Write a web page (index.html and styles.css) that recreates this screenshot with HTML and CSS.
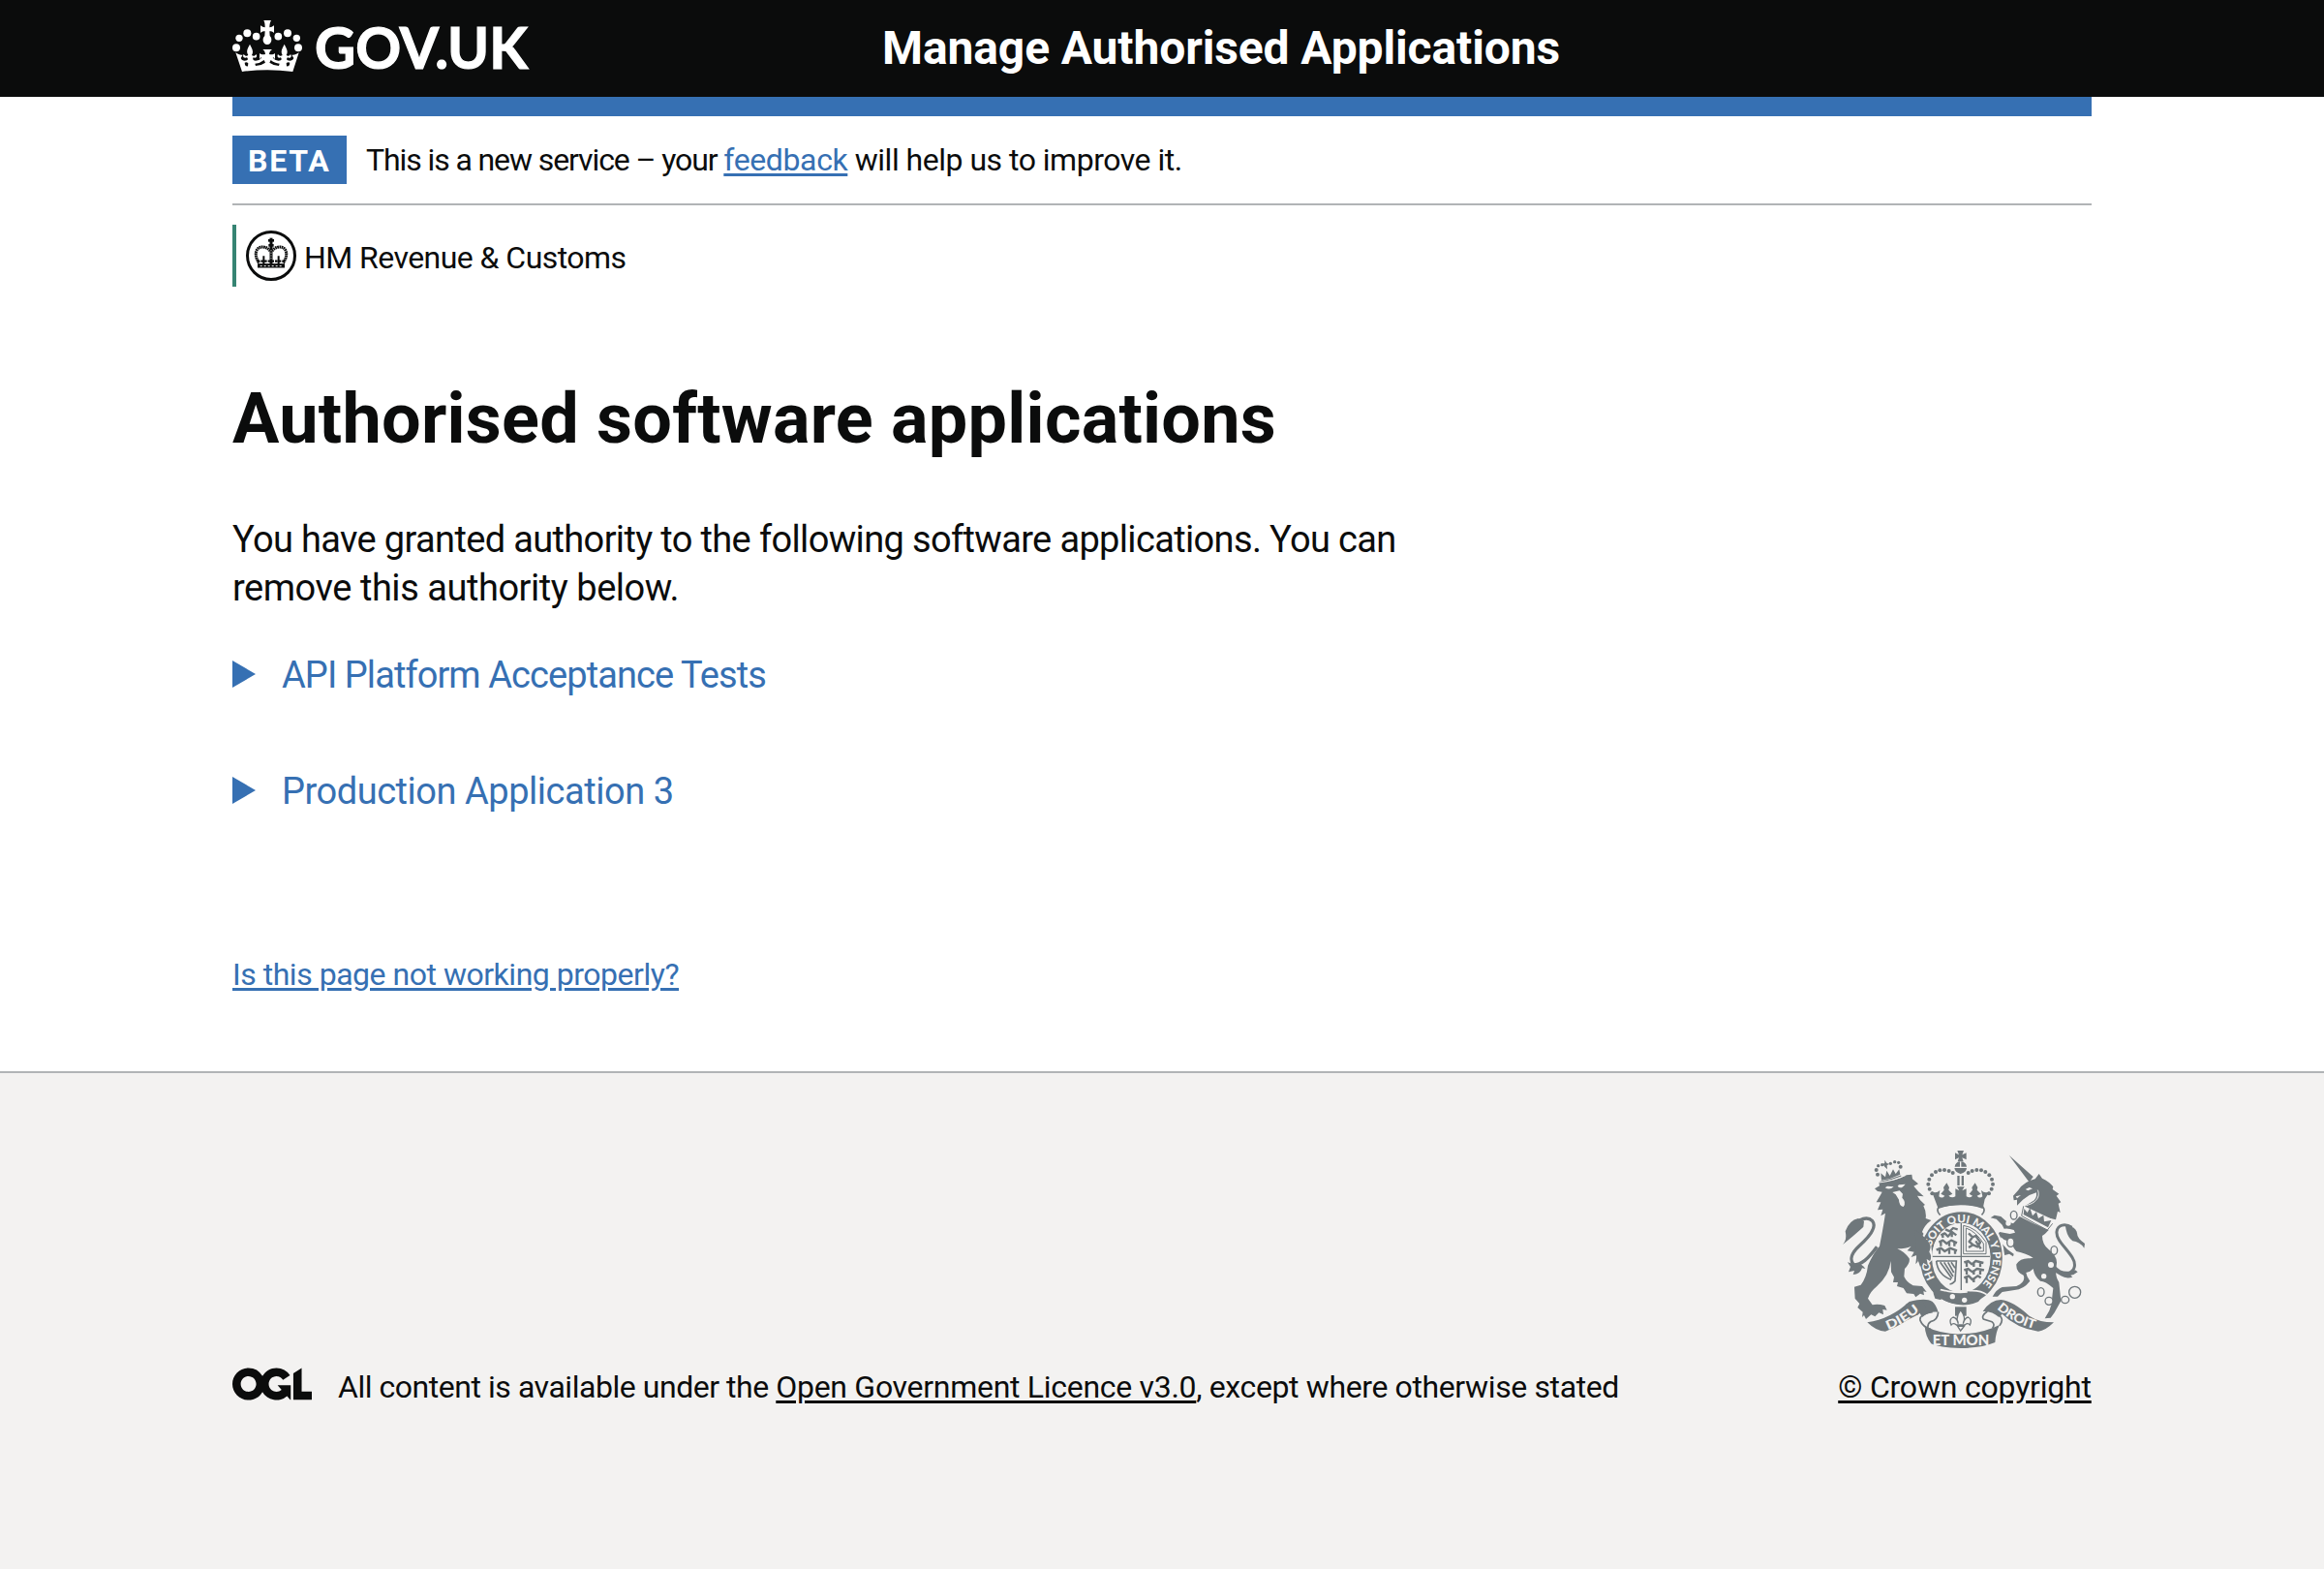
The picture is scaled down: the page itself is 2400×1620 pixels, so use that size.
FILE: index.html
```
<!DOCTYPE html>
<html lang="en">
<head>
<meta charset="utf-8">
<title>Authorised software applications</title>
<link rel="stylesheet" href="styles.css">
</head>
<body>
<header class="header">
  <svg class="header-logo" viewBox="0 0 310 60">
    <g fill="#fff" transform="scale(.33333) translate(-30 -60)">
      <circle cx="42" cy="148" r="12"/><circle cx="51" cy="118" r="11"/><circle cx="76" cy="103" r="12"/><circle cx="104" cy="113" r="11.5"/>
      <circle cx="172" cy="113" r="11.5"/><circle cx="201" cy="103" r="12"/><circle cx="229" cy="118" r="11"/><circle cx="234" cy="148" r="12"/>
      <path d="M127 63H150C147 69 145 74 145 85C150 85 154 83 159 79V102C154 98 150 97 145 97L146 111C155 119 152 138 138 138C124 138 121 119 130 111L131 97C126 97 122 98 117 102V79C122 83 126 85 131 85C131 74 130 69 127 63Z"/>
      <path d="M40 163C48 168 55 172 62 170L56 180C59 188 67 190 75 187C79 184 78 181 75 178C66 182 60 175 65 168C70 175 75 174 79 171C70 158 80 146 84 137C88 146 98 158 90 171C94 174 99 175 104 168C108 176 103 181 95 178C91 185 96 188 102 188C112 188 118 184 121 178C118 176 116 179 114 185V165C118 168 124 170 132 168C131 160 129 157 124 153H153C148 157 145 160 144 168C152 170 158 168 162 165V185C160 179 158 176 155 178C158 184 164 188 173 188C180 188 185 185 180 178C172 181 167 176 171 168C176 175 181 174 185 171C177 158 187 146 191 137C195 146 205 158 197 171C201 174 206 175 210 168C216 176 209 182 201 178C198 181 197 184 201 187C209 190 217 188 220 180L214 170C221 172 228 168 236 163L217 222Q138 212 60 222Z"/>
      <path fill="#0b0c0c" d="M68 194Q74 190 79 196L78 205Q70 206 69 200ZM100 197Q116 196 128 186L132 194Q120 203 102 204ZM176 197Q160 196 149 186L145 194Q157 203 174 204ZM208 194Q202 190 197 196L198 205Q206 206 207 200Z"/>
    </g>
    <text class="header-wordmark" x="85" y="51" textLength="220" lengthAdjust="spacingAndGlyphs">GOV.UK</text>
  </svg>
  <div class="header-title">Manage Authorised Applications</div>
</header>

<div class="container">
  <div class="header-bar"></div>
  <div class="phase">
    <strong class="phase-tag">BETA</strong>
    <div class="phase-text"><span class="phase-lead">This is a new service – your </span><a class="link phase-link" href="#">feedback</a><span class="phase-rest"> will help us to improve it.</span></div>
  </div>
  <div class="organisation">
    <svg class="organisation-crest" viewBox="72 354 156 156">
      <circle cx="150" cy="432" r="73.5" fill="none" stroke="#0b0c0c" stroke-width="9"/>
      <g fill="none" stroke="#0b0c0c">
        <path d="M150 377V458" stroke-width="9"/><path d="M141 385H159" stroke-width="8"/><path d="M142 400H158" stroke-width="8"/>
        <path d="M112 454C93 424 106 403 126 405C140 407 144 414 148 418" stroke-width="9" stroke-dasharray="5 1.5"/>
        <path d="M188 454C207 424 194 403 174 405C160 407 156 414 152 418" stroke-width="9" stroke-dasharray="5 1.5"/>
        <path d="M127 433V460M173 433V460" stroke-width="6"/>
        <path d="M107 449H193" stroke-width="7" stroke-dasharray="8 3"/>
        <path d="M108 463H192" stroke-width="13"/>
        <path d="M116 464H184" stroke="#fff" stroke-width="3" stroke-dasharray="6 6"/>
        <path d="M150 414V442" stroke="#fff" stroke-width="2" stroke-dasharray="4 4"/>
      </g>
    </svg>
    <span class="organisation-name">HM Revenue &amp; Customs</span>
  </div>

  <main class="main">
    <h1 class="heading">Authorised software applications</h1>
    <p class="lead"><span class="lead-first">You have granted authority to the following software applications. You can</span> <span class="lead-last">remove this authority below.</span></p>
    <div class="details">
      <div class="summary"><svg class="summary-arrow" viewBox="0 0 24 28"><path d="M0 0 24 14 0 28Z"/></svg><span class="summary-api">API Platform Acceptance Tests</span></div>
      <div class="summary"><svg class="summary-arrow" viewBox="0 0 24 28"><path d="M0 0 24 14 0 28Z"/></svg><span class="summary-production">Production Application 3</span></div>
    </div>
    <a class="link report" href="#">Is this page not working properly?</a>
  </main>
</div>

<footer class="footer">
  <div class="licence">
    <svg class="licence-logo" viewBox="0 0 483.2 195.7"><path d="M421.5 142.8V.1l-50.7 32.3v161.1h112.4v-50.7zm-122.3-9.6A47.12 47.12 0 0 1 221 97.8c0-26 21.1-47.1 47.1-47.1 16.7 0 31.4 8.7 39.7 21.8l42.7-27.2A97.63 97.63 0 0 0 268.1 0c-36.5 0-68.3 20.1-85.1 49.7A98 98 0 0 0 97.8 0C43.9 0 0 43.9 0 97.8s43.9 97.8 97.8 97.8c36.5 0 68.3-20.1 85.1-49.7a97.76 97.76 0 0 0 149.6 25.4l19.4 22.2h3v-87.8h-80l24.3 27.5zM97.8 145c-26 0-47.1-21.1-47.1-47.1s21.1-47.1 47.1-47.1 47.1 21.1 47.1 47.1S123.8 145 97.8 145"/></svg>
    <div class="licence-text"><span class="licence-lead">All content is available under the </span><a class="footer-link licence-link" href="#">Open Government Licence v3.0</a><span class="licence-rest">, except where otherwise stated</span></div>
  </div>
  <div class="copyright">
    <svg class="arms" viewBox="75 51 750 618">
      <defs>
        <path id="garter" d="M358 449A98 110 0 1 1 520 449L505 468"/>
        <path id="dieu" d="M212 609Q266 590 322 540"/>
        <path id="droit" d="M549 543Q600 590 674 608"/>
      </defs>
      <!-- lion -->
      <g class="arms-fill">
        <path d="M171 172L186 163 184 152Q235 150 268 130L286 128 288 142 306 157 292 164Q306 182 323 196L303 194Q310 208 327 222L322 225Q332 245 329 264L346 270Q325 285 318 306Q340 330 345 352L340 368Q352 380 344 397L332 390 336 410 322 402 318 418 308 394 298 406 301 378 284 384 293 368 272 364 284 350Q268 358 241 358Q262 366 278 388Q282 402 264 420L262 444Q270 462 290 472L318 474 332 492 322 490 324 502 312 497 298 508 292 498 270 496 260 480 240 474 243 462 228 462 231 446 222 430 221 396Q216 440 178 474Q156 492 150 512L164 532Q180 528 202 534L209 548 196 546 198 562 184 556 172 568 160 562 144 576 138 564 132 570 134 554 118 540 124 528 110 512 108 476 128 470Q146 446 150 410Q166 372 186 350Q198 290 204 248L190 256 196 236 180 238 190 214 176 214 190 190 194 182 180 180Z"/>
        <path d="M72 345Q86 330 80 304Q92 270 120 264L138 272 136 290Q110 315 72 345Z"/>
        <path d="M102 404L87 400 96 414 90 430 108 426 104 438Q126 438 132 418L142 420Q134 404 112 404Z"/>
      </g>
      <path class="arms-line" stroke-width="10" d="M178 352C150 390 130 408 106 408C92 392 100 370 122 350C156 320 178 290 164 272C152 260 136 264 124 270"/>
      <path class="arms-bg" d="M203 169Q218 178 230 166L210 164ZM242 164Q252 176 266 158L246 160ZM226 183L248 178 258 188 256 200Q270 214 260 228Q246 224 246 206L236 190Z"/>
      <!-- lion's crown -->
      <g class="arms-fill">
        <path d="M192 146Q222 142 250 128L247 112 236 126 228 112 218 132 208 116 204 136 190 124Z"/>
        <circle cx="180" cy="128" r="6"/><circle cx="176" cy="114" r="6"/><circle cx="182" cy="101" r="5"/><circle cx="194" cy="98" r="5"/><circle cx="220" cy="94" r="5"/><circle cx="233" cy="89" r="5"/><circle cx="245" cy="91" r="5"/><circle cx="251" cy="104" r="6"/>
        <path d="M202 83L208 92 216 96 209 100 210 112 202 104 196 96 202 92Z"/>
      </g>
      <path class="arms-line" d="M188 151Q224 144 253 132" stroke-width="4"/>
      <path class="arms-bg-line" stroke-width="3" d="M184 153Q230 148 268 130"/>
      <!-- unicorn -->
      <g class="arms-fill">
        <path d="M587 68L662 135 650 152Z"/>
        <path d="M600 194L616 176Q634 150 668 142L680 126 690 140Q712 150 724 166L722 174 742 188 734 194 748 214 740 218 746 246 738 242 732 268Q700 262 668 250Q648 242 636 226L658 212Q674 206 672 184L650 192 630 206 612 224 612 206 602 208Z"/>
        <path d="M620 258Q660 280 710 300Q700 312 690 318Q690 345 710 360Q740 382 734 410Q728 440 742 462L748 520 728 556 716 572 698 574 712 550 718 532 724 480Q700 458 684 458Q666 445 662 420L652 428 640 432Q642 446 652 458Q632 484 604 486L566 492 552 506 536 506Q548 484 566 477L610 474Q640 462 632 440Q608 430 610 406Q622 386 652 388L662 386Q640 372 610 366Q595 350 600 340L572 330 562 322 560 336 582 360 602 374 600 382 588 374 574 378 566 362 552 340 548 320 558 306 590 312 606 308 602 300Q586 294 572 296L566 284 548 266 530 262 542 254 562 258 578 272 600 280Z"/>
        <path d="M762 288Q794 286 798 310Q798 326 822 342L820 356Q806 336 784 334Q766 320 762 288Z"/>
        <path d="M730 410Q748 432 774 428L792 424 800 430Q788 440 778 440L784 446Q764 452 748 442L728 430Z"/>
      </g>
      <path class="arms-line" stroke-width="9" d="M782 292C760 278 738 284 735 305C732 330 765 355 783 385C797 408 790 426 772 434"/>
      <path class="arms-bg" d="M638 174L650 168 660 172 646 178ZM608 196L624 192 612 202Z"/>
      <path class="arms-bg-line" stroke-width="3" d="M640 224C680 214 682 190 676 176"/>
      <path class="arms-bg" d="M634 226L728 270 706 300L624 258Z"/>
      <path class="arms-line" stroke-width="3" d="M632 226L626 256Q670 282 706 300L722 280"/>
      <path class="arms-fill" d="M634 234L644 246 652 232 660 256 672 244 678 264 694 254 696 274 718 270 708 292 632 252Z"/>
      <g class="arms-ring"><ellipse cx="602" cy="254" rx="10" ry="13"/><ellipse cx="592" cy="338" rx="11" ry="14"/><ellipse cx="727" cy="363" rx="10" ry="13"/><ellipse cx="686" cy="492" rx="10" ry="13"/><ellipse cx="711" cy="520" rx="12" ry="12"/><ellipse cx="761" cy="516" rx="12" ry="11"/><circle cx="791" cy="493" r="18"/></g>
      <g class="arms-bg"><circle cx="585" cy="279" r="8"/><circle cx="717" cy="408" r="9"/><circle cx="695" cy="443" r="8"/></g>
      <!-- crown -->
      <g class="arms-fill">
        <path d="M427 54H447L442 67 455 61V82L442 76 446 88H428L432 76 420 82V61L432 67Z"/>
        <path d="M419 104Q421 90 435 88V104ZM439 88Q454 90 456 104H439ZM418 108H456Q455 122 437 126Q420 122 418 108Z"/>
        <path d="M427 132H434V162H427ZM440 132H447V162H440Z"/>
        <circle cx="413" cy="123" r="6"/><circle cx="401" cy="117" r="6"/><circle cx="387" cy="114" r="6"/><circle cx="373" cy="115" r="6"/><circle cx="360" cy="120" r="6"/><circle cx="348" cy="130" r="6"/><circle cx="340" cy="143" r="6"/><circle cx="337" cy="158" r="6"/><circle cx="341" cy="173" r="6"/><circle cx="349" cy="187" r="6"/>
        <circle cx="461" cy="123" r="6"/><circle cx="473" cy="117" r="6"/><circle cx="487" cy="114" r="6"/><circle cx="501" cy="115" r="6"/><circle cx="514" cy="120" r="6"/><circle cx="526" cy="130" r="6"/><circle cx="534" cy="143" r="6"/><circle cx="537" cy="158" r="6"/><circle cx="533" cy="173" r="6"/><circle cx="525" cy="187" r="6"/>
        <path d="M357 205L348 181Q362 188 373 177L370 196Q380 204 388 194L376 188 386 176 384 168 394 154 402 168 400 176 412 188 400 194Q410 202 421 196V172L433 178 426 166H449L442 178 455 172V196Q466 202 474 194L464 188 474 176 472 168 482 154 490 168 488 176 500 188 488 194Q496 204 505 196L501 177Q512 188 527 181L512 205 506 234Q437 208 368 234Z"/>
      </g>
      <path class="arms-line" d="M374 254Q360 240 370 228Q437 212 506 228Q516 240 502 254" stroke-width="5"/>
      <!-- shield and garter -->
      <ellipse class="arms-bg" cx="439" cy="387" rx="134" ry="152"/>
      <ellipse class="arms-line" cx="439" cy="387" rx="109" ry="125" stroke-width="37"/>
      <ellipse class="arms-bg" cx="439" cy="382" rx="90" ry="104"/>
      <g class="arms-line" stroke-width="4"><path d="M350 382H528M439 278V486"/>
        <path d="M446 286V374H516M454 294V366H508M446 286Q486 292 516 338V374M454 294Q484 304 508 342V366" stroke-width="3"/>
        <path d="M362 396H424L420 458Q408 470 404 466M362 396Q366 438 408 454M374 400 410 450M386 400 414 444M398 400 416 432M408 400 420 418" stroke-width="5"/>
      </g>
      <g class="arms-line" stroke-width="7" stroke-linejoin="round">
        <path d="M376 316L388 310 398 320 410 306 424 316M390 298L404 304 414 294 428 298M370 338L382 332 394 342 408 332 426 340M362 362L376 356 388 366 404 356 426 364M382 310V324M410 308V322M376 334V350M402 334V350M372 358V374M402 358V374M418 336V350M420 362V374"/>
        <path d="M448 400L460 396 472 406 484 396 508 402M448 424L460 420 474 430 488 420 510 424M448 448L462 442 474 454 490 442 500 448M456 400V414M478 400V414M498 400V414M456 424V438M478 424V438M498 424V438M456 448V464M478 448V462"/>
        <path d="M462 310L474 322 484 318 498 338 490 352 476 346 462 354M474 322 464 336 476 346M484 334 500 358"/>
      </g>
      <path class="arms-bg-line" stroke-width="5" d="M364 482Q410 496 458 492M464 488Q500 486 518 500M380 520 368 480"/>
      <path class="arms-fill" d="M358 512Q340 468 374 470Q394 474 388 484L378 480Q368 488 382 498L394 490 386 510 374 516ZM384 494Q436 516 510 500L492 522Q440 546 378 514Z"/>
      <circle class="arms-bg" cx="412" cy="506" r="8"/><circle class="arms-bg" cx="449" cy="517" r="8"/>
      <text class="arms-motto" font-size="34"><textPath href="#garter" textLength="480" lengthAdjust="spacingAndGlyphs">HONI SOIT QUI MAL Y PENSE</textPath></text>
      <!-- lion's raised paw crosses the garter -->
      <path class="arms-bg" d="M312 316L346 346 350 392 330 412 306 388Z"/>
      <path class="arms-fill" d="M296 300Q344 332 344 354L340 368Q350 382 342 396L332 390 336 410 322 402 312 414 300 378Z"/>
      <!-- ribbon -->
      <path class="arms-fill" d="M148 586Q220 576 278 522Q330 508 350 522Q360 530 368 554Q340 550 318 570Q310 558 306 546Q270 590 204 614Q176 614 148 586ZM726 586Q680 586 650 566Q600 520 562 516Q530 516 506 552Q534 550 556 570L566 560Q610 604 678 614Q700 612 726 586ZM326 598Q380 624 437 622Q500 622 558 594Q546 616 544 648Q500 666 437 666Q370 664 346 652Q328 630 326 598Z"/>
      <path class="arms-fill" d="M270 528L318 516 330 540 306 562 250 590 204 604Z"/>
      <path class="arms-line" stroke-width="5" d="M350 554Q308 560 312 580Q320 600 345 608M368 554Q366 580 344 584Q334 590 336 604M520 552Q500 566 508 576L534 584Q545 592 536 604M548 556Q576 574 558 596"/>
      <text class="arms-motto" font-size="39"><textPath href="#dieu" textLength="116" lengthAdjust="spacingAndGlyphs">DIEU</textPath></text>
      <text class="arms-motto" font-size="39"><textPath href="#droit" textLength="134" lengthAdjust="spacingAndGlyphs">DROIT</textPath></text>
      <text class="arms-motto" x="350" y="657" font-size="46" textLength="176" lengthAdjust="spacingAndGlyphs">ET MON</text>
      <!-- fleur-de-lis -->
      <path class="arms-fill" d="M420 538H455V566H420Z"/>
      <path class="arms-fleur" d="M437 548Q420 570 430 590Q428 574 414 570Q400 576 408 594Q414 586 424 594H450Q460 586 466 594Q474 576 460 570Q448 574 445 590Q455 570 437 548ZM428 598H448L437 612Z"/>
    </svg>
    <a class="footer-link copyright-link" href="#">© Crown copyright</a>
  </div>
</footer>
</body>
</html>
```
FILE: styles.css
```
* { box-sizing: border-box; }
body {
  margin: 0;
  background: #fff;
  color: #0b0c0c;
  font-family: Roboto, "Liberation Sans", sans-serif;
  font-size: 32px;
  line-height: 40px;
}
svg { display: block; overflow: visible; }
.header {
  display: flex;
  align-items: center;
  height: 100px;
  padding: 0 240px;
  background: #0b0c0c;
  color: #fff;
}
.header-logo { width: 310px; height: 60px; margin-right: 361px; }
.header-wordmark { fill: #fff; stroke: #fff; stroke-width: 1.2px; font: 700 59px/1.2 Lato, sans-serif; }
.header-title { font-size: 48px; line-height: 60px; font-weight: 700; letter-spacing: -0.12px; white-space: pre; }
.container { width: 1920px; margin: 0 auto; }
.header-bar { height: 20px; background: #3670b3; }
.phase {
  display: flex;
  align-items: center;
  gap: 20px;
  height: 92px;
  border-bottom: 2px solid #b1b4b6;
}
.phase-tag {
  width: 118px;
  height: 50px;
  padding: 1px 0 0 16px;
  background: #3670b3;
  color: #fff;
  line-height: 50px;
  letter-spacing: 1.8px;
}
.phase-text { white-space: pre; }
.phase-lead { letter-spacing: -1.1px; }
.phase-link { letter-spacing: -0.385px; }
.phase-rest { letter-spacing: -0.5px; }
.link { color: #3670b3; text-decoration-thickness: 3px; text-underline-offset: 3px; }
.organisation {
  display: flex;
  align-items: center;
  height: 64px;
  margin-top: 20px;
  padding-left: 10px;
  border-left: 4px solid #368473;
}
.organisation-crest { width: 52px; height: 52px; margin-right: 8px; }
.organisation-name { padding-top: 3px; letter-spacing: -0.55px; }
.heading { margin: 97px 0 59px; font-size: 72px; line-height: 80px; letter-spacing: 0.25px; }
.lead { width: 1260px; margin: 0 0 40px; font-size: 38px; line-height: 50px; }
.lead-first { white-space: nowrap; letter-spacing: -0.65px; }
.lead-last { letter-spacing: -0.46px; }
.details { display: flex; flex-direction: column; gap: 70px; color: #3670b3; font-size: 38px; line-height: 50px; }
.summary { display: flex; align-items: center; gap: 27px; }
.summary-arrow { width: 24px; height: 28px; margin-top: -2px; fill: #3670b3; }
.summary-api { letter-spacing: -0.93px; }
.summary-production { letter-spacing: -0.47px; }
.report { display: block; width: fit-content; margin: 144px 0 80px; letter-spacing: -0.48px; }
.footer {
  display: flex;
  justify-content: space-between;
  align-items: flex-end;
  height: 514px;
  padding: 0 240px 168px;
  border-top: 2px solid #b1b4b6;
  background: #f3f2f1;
}
.licence { display: flex; gap: 27px; }
.licence-logo { width: 82px; height: 34px; fill: #0b0c0c; }
.licence-text { white-space: pre; }
.licence-lead { letter-spacing: -0.46px; }
.licence-link { letter-spacing: -0.294px; }
.licence-rest { letter-spacing: -0.38px; }
.footer-link { color: #0b0c0c; text-decoration-thickness: 3px; text-underline-offset: 3px; }
.copyright { display: flex; flex-direction: column; align-items: center; gap: 19px; width: 262px; white-space: nowrap; }
.copyright-link { letter-spacing: -0.2px; }
.arms { width: 250px; height: 206px; }
.arms-fill { fill: #6f777b; }
.arms-bg { fill: #f3f2f1; }
.arms-line { fill: none; stroke: #6f777b; }
.arms-bg-line { fill: none; stroke: #f3f2f1; }
.arms-ring { fill: #f3f2f1; stroke: #6f777b; stroke-width: 4px; }
.arms-fleur { fill: #f3f2f1; stroke: #6f777b; stroke-width: 4px; }
.arms-motto { fill: #f3f2f1; font-family: Lato, sans-serif; font-weight: 900; }
```
